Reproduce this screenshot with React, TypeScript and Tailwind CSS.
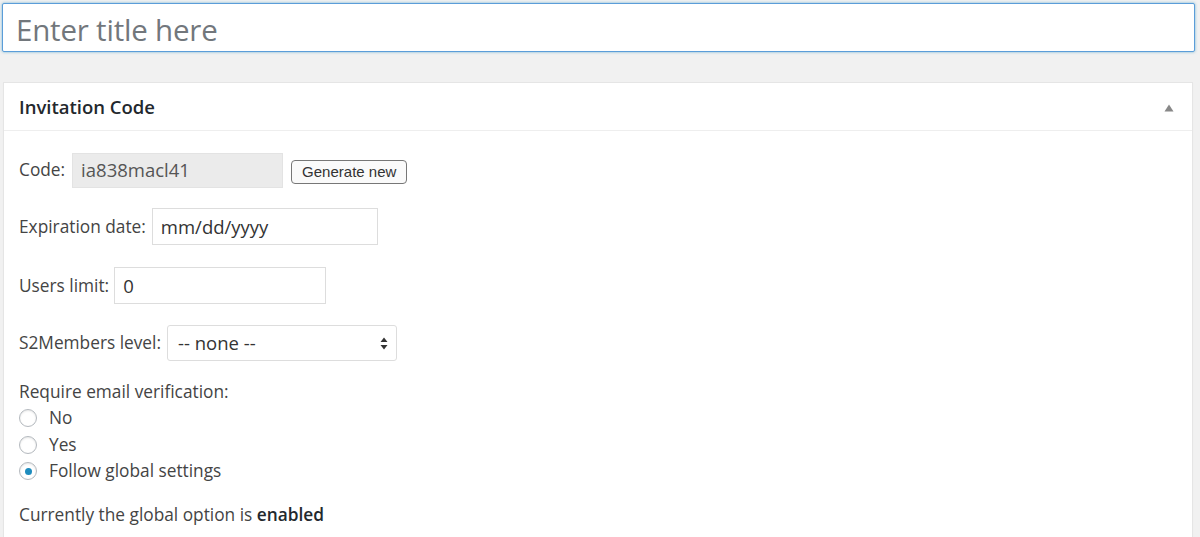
import React from "react";

const font = { fontFamily: '"Open Sans", "Noto Sans", sans-serif' };

const Radio: React.FC<{ label: string; checked?: boolean }> = ({ label, checked }) => (
  <label className="flex items-center h-[26.5px]">
    <span className="w-[18px] h-[18px] rounded-full border border-[#b4b9be] bg-white flex items-center justify-center shadow-[inset_0_1px_2px_rgba(0,0,0,0.1)]">
      {checked && <span className="w-[7px] h-[7px] rounded-full bg-[#1e8cbe]" />}
    </span>
    <span className="ml-[12px]">{label}</span>
  </label>
);

export default function App() {
  return (
    <div className="w-[1200px] h-[537px] bg-[#f1f1f1] overflow-hidden text-[#444] text-[17.3px]" style={font}>
      <div className="pt-[3px] pl-[2px] pr-[5px]">
        <div className="h-[49px] bg-white border border-[#5b9dd9] rounded-[2px] shadow-[0_0_3px_rgba(30,140,190,0.6)] flex items-center pl-[13px] pt-[5px] text-[29.5px] text-[#72777c] tracking-[-0.2px]">
          Enter title here
        </div>
      </div>
      <div className="ml-[3px] mr-[7px] mt-[30px] bg-white border border-[#e5e5e5] shadow-[0_1px_1px_rgba(0,0,0,0.04)] h-[480px]">
        <div className="h-[48px] border-b border-[#eee] flex items-center justify-between pl-[15px] pr-[18px]">
          <span className="text-[18.5px] font-semibold text-[#23282d]">Invitation Code</span>
          <svg width="10" height="8" viewBox="0 0 10 8" className="mt-[2px]">
            <path d="M5 0.5 L9.5 7.5 L0.5 7.5 Z" fill="#888" />
          </svg>
        </div>
        <div className="pl-[15px] pt-[21px]">
          <div className="flex items-center h-[36px]">
            <span>Code:</span>
            <div className="ml-[7px] w-[211px] h-[35px] bg-[#ebebeb] border border-[#e3e3e3] flex items-center pl-[8px] text-[18.5px] text-[#555]">
              ia838macl41
            </div>
            <button className="ml-[8px] mt-[3px] h-[24px] px-[10px] border border-[#777] rounded-[4px] bg-[#fafafa] text-[15px] text-[#333] leading-none" style={{ fontFamily: '"Liberation Sans", Arial, sans-serif' }}>
              Generate new
            </button>
          </div>
          <div className="flex items-center h-[37px] mt-[20px]">
            <span>Expiration date:</span>
            <div className="ml-[6px] w-[226px] h-[37px] border border-[#ddd] flex items-center pl-[8px] text-[18.5px] text-[#333]">
              mm/dd/yyyy
            </div>
          </div>
          <div className="flex items-center h-[37px] mt-[22px]">
            <span>Users limit:</span>
            <div className="ml-[5px] w-[212px] h-[37px] border border-[#ddd] flex items-center pl-[8px] text-[18.5px] text-[#333]">
              0
            </div>
          </div>
          <div className="flex items-center h-[36px] mt-[21px]">
            <span>S2Members level:</span>
            <div className="ml-[6px] w-[230px] h-[36px] border border-[#ddd] rounded-[3px] flex items-center justify-between pl-[10px] pr-[8px] text-[18.5px] text-[#333]">
              <span>-- none --</span>
              <svg width="8" height="13" viewBox="0 0 8 13">
                <path d="M4 0.5 L7.5 5 L0.5 5 Z M4 12.5 L7.5 8 L0.5 8 Z" fill="#333" />
              </svg>
            </div>
          </div>
          <div className="mt-[18px] leading-[26px]">Require email verification:</div>
          <div className="flex flex-col">
            <Radio label="No" />
            <Radio label="Yes" />
            <Radio label="Follow global settings" checked />
          </div>
          <div className="mt-[17px]">
            Currently the global option is <span className="font-semibold text-[#23282d]">enabled</span>
          </div>
        </div>
      </div>
    </div>
  );
}
